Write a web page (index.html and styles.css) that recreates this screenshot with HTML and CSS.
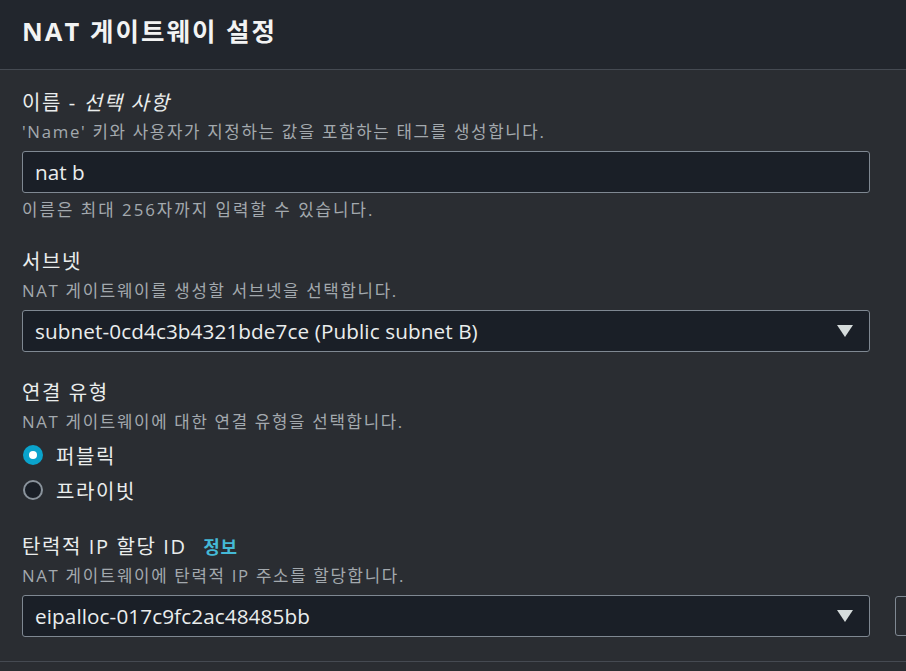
FILE: index.html
```html
<!DOCTYPE html>
<html lang="ko">
<head>
<meta charset="utf-8">
<title>NAT 게이트웨이 설정</title>
<link rel="stylesheet" href="styles.css">
</head>
<body>
<div class="panel">
  <header class="panel-header">
    <h2 class="panel-title">NAT 게이트웨이 설정</h2>
  </header>
  <section class="panel-body">
    <div class="field">
      <label class="field-label">이름 - <i>선택 사항</i></label>
      <div class="field-desc">'Name' 키와 사용자가 지정하는 값을 포함하는 태그를 생성합니다.</div>
      <div class="control"><input class="text-input" type="text" value="nat b"></div>
      <div class="field-hint">이름은 최대 256자까지 입력할 수 있습니다.</div>
    </div>

    <div class="field">
      <label class="field-label">서브넷</label>
      <div class="field-desc">NAT 게이트웨이를 생성할 서브넷을 선택합니다.</div>
      <div class="control">
        <div class="select">
          <span class="select-value">subnet-0cd4c3b4321bde7ce (Public subnet B)</span>
          <span class="caret"></span>
        </div>
      </div>
    </div>

    <div class="field radio-field">
      <label class="field-label">연결 유형</label>
      <div class="field-desc">NAT 게이트웨이에 대한 연결 유형을 선택합니다.</div>
      <div class="radio-group">
        <div class="radio-row"><span class="radio checked"></span><span class="radio-label">퍼블릭</span></div>
        <div class="radio-row"><span class="radio"></span><span class="radio-label">프라이빗</span></div>
      </div>
    </div>

    <div class="field">
      <label class="field-label">탄력적 IP 할당 ID <a class="info-link">정보</a></label>
      <div class="field-desc">NAT 게이트웨이에 탄력적 IP 주소를 할당합니다.</div>
      <div class="control control-row">
        <div class="select">
          <span class="select-value">eipalloc-017c9fc2ac48485bb</span>
          <span class="caret"></span>
        </div>
        <span class="side-button"></span>
      </div>
    </div>
  </section>
</div>
</body>
</html>
```

FILE: styles.css
```css
html, body {
  margin: 0;
  padding: 0;
  background: #2a2d32;
  overflow: hidden;
}

body {
  font-family: "Open Sans", "Noto Sans CJK KR", sans-serif;
  color: #eaeded;
  width: 906px;
  height: 671px;
}

.panel {
  background: #2a2d32;
}

.panel-header {
  box-sizing: border-box;
  height: 70px;
  background: #22262d;
  border-bottom: 1px solid #454a52;
  padding: 0 22px;
  display: flex;
  align-items: center;
}

.panel-title {
  margin: 0 0 8px 0;
  font-size: 25.5px;
  font-weight: 700;
  letter-spacing: 0.08em;
  color: #f2f3f3;
  line-height: 32px;
}

.panel-body {
  padding: 21px 36px 24px 22px;
  border-bottom: 1px solid #454a52;
  overflow: hidden;
  display: flex;
  flex-direction: column;
}

.field {
  display: flex;
  flex-direction: column;
  align-items: flex-start;
}

.field + .field {
  margin-top: 28px;
}

.field.radio-field {
  margin-top: 29px;
}

.field-label {
  display: block;
  font-size: 20px;
  line-height: 24px;
  letter-spacing: 0.08em;
  color: #eaeded;
}

.field-label i {
  font-style: italic;
}

.field-desc,
.field-hint {
  font-size: 16.8px;
  line-height: 20px;
  letter-spacing: 0.1em;
  color: #a3a9ae;
  margin-top: 7px;
}

.field-hint {
  margin-top: 7px;
  margin-bottom: 2px;
  letter-spacing: 0.12em;
}

.control {
  margin-top: 9px;
}

.control-row {
  display: flex;
  gap: 25px;
}

.text-input,
.select {
  box-sizing: border-box;
  width: 848px;
  flex: none;
  height: 42px;
  background: #1a1f27;
  border: 1px solid #7f8892;
  border-radius: 3px;
  color: #eaeded;
  font-family: "Open Sans", "Noto Sans CJK KR", sans-serif;
  font-size: 20.7px;
  padding: 0 12px;
  display: flex;
  align-items: center;
}

.text-input {
  display: block;
  outline: none;
}

.select {
  justify-content: space-between;
  padding-right: 16px;
}

.select-value {
  letter-spacing: 0.005em;
}

.caret {
  width: 0;
  height: 0;
  border-left: 8px solid transparent;
  border-right: 8px solid transparent;
  border-top: 12px solid #d5dbdb;
}

.side-button {
  flex: none;
  box-sizing: border-box;
  width: 160px;
  height: 40px;
  margin-top: 1px;
  background: transparent;
  border: 1px solid #7f8892;
  border-radius: 3px;
}

.radio-group {
  margin-top: 9px;
  margin-bottom: 3px;
  display: flex;
  flex-direction: column;
  gap: 7px;
}

.radio-row {
  display: flex;
  align-items: center;
  height: 28px;
}

.radio {
  box-sizing: border-box;
  width: 20px;
  height: 20px;
  border-radius: 50%;
  border: 2px solid #8a939c;
  background: #1a1f27;
  margin-left: 1px;
  display: flex;
  align-items: center;
  justify-content: center;
}

.radio.checked {
  border: none;
  background: #0aa3cc;
}

.radio.checked::after {
  content: "";
  width: 8px;
  height: 8px;
  border-radius: 50%;
  background: #ffffff;
}

.radio-label {
  margin-left: 13px;
  font-size: 20px;
  letter-spacing: 0.08em;
  color: #eaeded;
}

.info-link {
  margin-left: 10px;
  font-size: 18px;
  font-weight: 700;
  color: #44b9d6;
  letter-spacing: 0.03em;
}
```
